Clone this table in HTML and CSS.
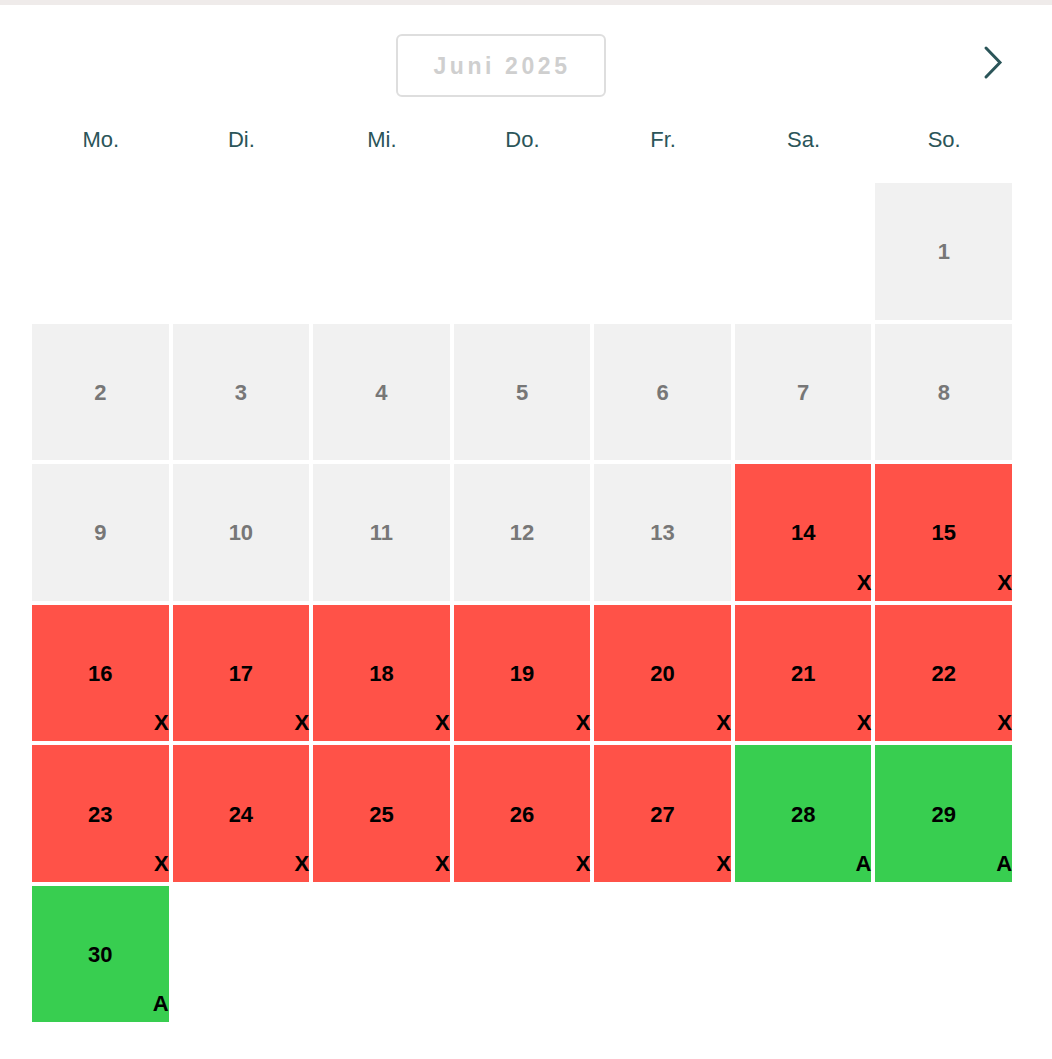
FILE: index.html
```html
<!DOCTYPE html>
<html lang="de">
<head>
<meta charset="utf-8">
<title>Kalender Juni 2025</title>
<link rel="stylesheet" href="styles.css">
</head>
<body>
<div class="topbar"></div>
<div class="calendar">
  <div class="header">
    <div class="title">Juni 2025</div>
    <button class="next" aria-label="Nächster Monat">
      <svg width="22" height="36" viewBox="0 0 22 36"><path d="M4 3 L18 17.5 L4 32" fill="none" stroke="#2b5559" stroke-width="3" stroke-linecap="round" stroke-linejoin="miter"/></svg>
    </button>
  </div>
  <div class="weekdays">
    <div>Mo.</div><div>Di.</div><div>Mi.</div><div>Do.</div><div>Fr.</div><div>Sa.</div><div>So.</div>
  </div>
  <div class="grid">
    <div class="empty"></div><div class="empty"></div><div class="empty"></div><div class="empty"></div><div class="empty"></div><div class="empty"></div>
    <div class="day past">1</div>
    <div class="day past">2</div>
    <div class="day past">3</div>
    <div class="day past">4</div>
    <div class="day past">5</div>
    <div class="day past">6</div>
    <div class="day past">7</div>
    <div class="day past">8</div>
    <div class="day past">9</div>
    <div class="day past">10</div>
    <div class="day past">11</div>
    <div class="day past">12</div>
    <div class="day past">13</div>
    <div class="day booked">14<span class="mark">X</span></div>
    <div class="day booked">15<span class="mark">X</span></div>
    <div class="day booked">16<span class="mark">X</span></div>
    <div class="day booked">17<span class="mark">X</span></div>
    <div class="day booked">18<span class="mark">X</span></div>
    <div class="day booked">19<span class="mark">X</span></div>
    <div class="day booked">20<span class="mark">X</span></div>
    <div class="day booked">21<span class="mark">X</span></div>
    <div class="day booked">22<span class="mark">X</span></div>
    <div class="day booked">23<span class="mark">X</span></div>
    <div class="day booked">24<span class="mark">X</span></div>
    <div class="day booked">25<span class="mark">X</span></div>
    <div class="day booked">26<span class="mark">X</span></div>
    <div class="day booked">27<span class="mark">X</span></div>
    <div class="day free">28<span class="mark">A</span></div>
    <div class="day free">29<span class="mark">A</span></div>
    <div class="day free">30<span class="mark">A</span></div>
  </div>
</div>
</body>
</html>
```

FILE: styles.css
```css
* { box-sizing: border-box; }
html, body { margin: 0; padding: 0; background: #fff; }
body {
  font-family: "Liberation Sans", Arial, Helvetica, sans-serif;
  width: 1052px;
  height: 1059px;
  overflow: hidden;
}
.topbar {
  height: 5px;
  background: #efebea;
}
.calendar {
  padding: 29px 40px 0 32px;
}
.header {
  display: flex;
  align-items: center;
  height: 63px;
}
.title {
  margin-left: 364px;
  width: 210px;
  height: 63px;
  border: 2px solid #dedede;
  border-radius: 6px;
  display: flex;
  align-items: center;
  justify-content: center;
  font-weight: bold;
  font-size: 23px;
  letter-spacing: 3.6px;
  color: #cfcfcf;
  padding-left: 2px;
  padding-top: 1px;
}
.next {
  margin-left: auto;
  margin-right: 8px;
  margin-top: -6px;
  background: none;
  border: 0;
  padding: 0;
  display: flex;
}
.weekdays {
  display: grid;
  grid-template-columns: repeat(7, 1fr);
  gap: 4px;
  margin-top: 30px;
  font-size: 22px;
  line-height: 26px;
  color: #2b5559;
  text-align: center;
}
.weekdays div { padding-left: 1px; }
.grid {
  display: grid;
  grid-template-columns: repeat(7, 1fr);
  gap: 4px;
  margin-top: 30px;
}
.day {
  position: relative;
  aspect-ratio: 1 / 1;
  display: flex;
  align-items: center;
  justify-content: center;
  padding-top: 2px;
  font-weight: bold;
  font-size: 22px;
  color: #000;
}
.past {
  background: #f1f1f1;
  color: #777;
}
.booked { background: #ff5248; }
.free { background: #38ce50; }
.mark {
  position: absolute;
  right: 0;
  bottom: 7px;
  line-height: 22px;
  font-size: 22px;
  font-weight: bold;
}
```
